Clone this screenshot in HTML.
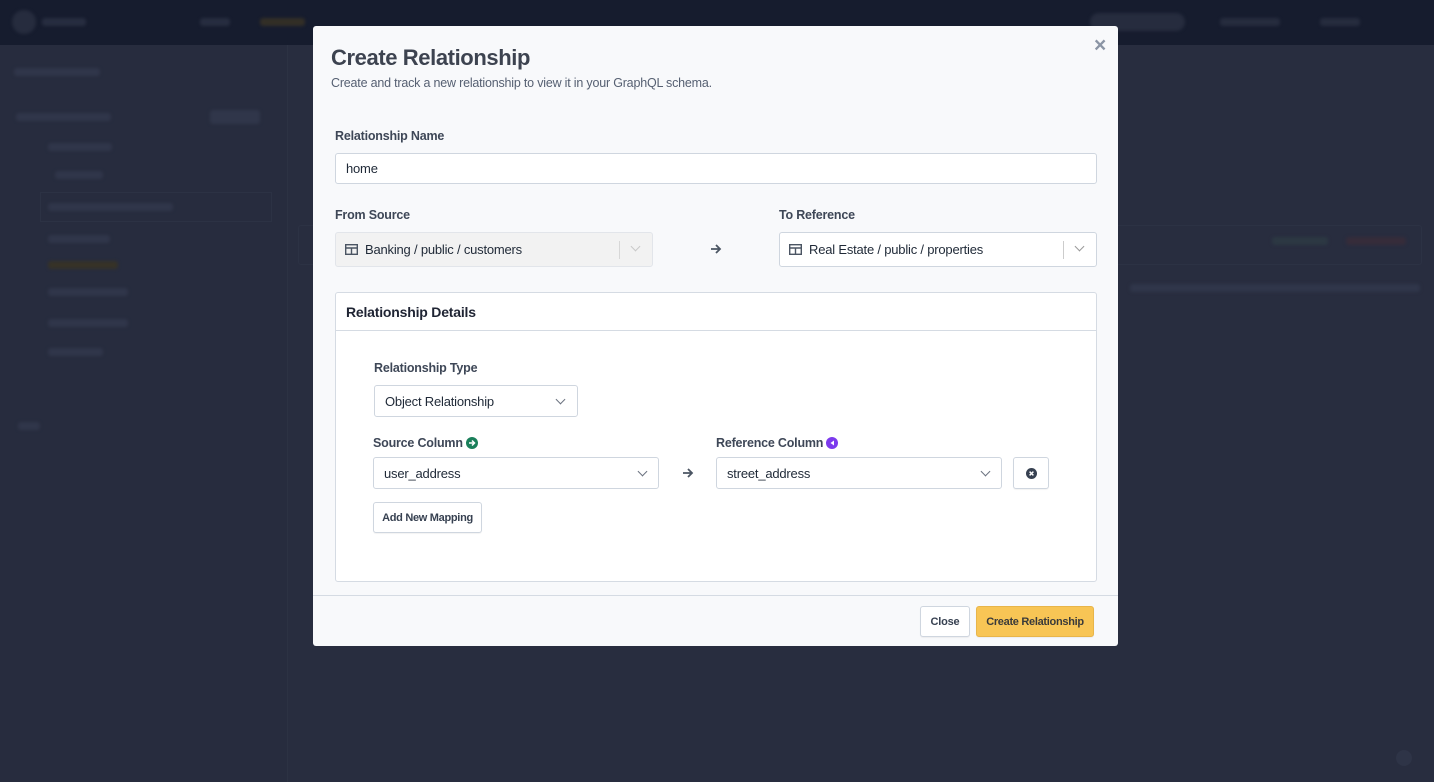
<!DOCTYPE html>
<html><head><meta charset="utf-8"><style>
*{box-sizing:border-box;margin:0;padding:0}
body{width:1434px;height:782px;overflow:hidden;background:#282d3f;font-family:"Liberation Sans",sans-serif;position:relative}
.a{position:absolute}
.nav{left:0;top:0;width:1434px;height:45px;background:#161c2e}
.side{left:0;top:45px;width:288px;height:737px;background:#272c3e;border-right:1px solid #2c3243}
.blur{background:#30364a;border-radius:3px;height:8px;filter:blur(1.5px)}
.modal{left:313px;top:26px;width:805px;height:620px;background:#f8f9fb;border-radius:3px;letter-spacing:-.2px}
.lbl{font-size:12.5px;font-weight:bold;color:#3e4757}
.inp{background:#fff;border:1px solid #cfd6df;border-radius:3px;font-size:13px;color:#1f2937}
.chev{position:absolute;width:7px;height:7px;border-right:1.3px solid #6b7280;border-bottom:1.3px solid #6b7280;transform:rotate(45deg)}
.btn{background:#fff;border:1px solid #cfd6df;border-radius:3px;font-size:11px;font-weight:bold;color:#374151;display:flex;align-items:center;justify-content:center;box-shadow:0 1px 1px rgba(0,0,0,.05)}
.ic{display:inline-block;width:12px;height:12px;border-radius:50%;vertical-align:-2px;margin-left:3px;position:relative}
</style></head><body>
<div class="a nav"></div>
<div class="a" style="left:12px;top:10px;width:24px;height:24px;border-radius:50%;background:#262c3e;filter:blur(1.5px)"></div>
<div class="a blur" style="left:42px;top:18px;width:44px;background:#272d40"></div>
<div class="a blur" style="left:200px;top:18px;width:30px;background:#272d40"></div>
<div class="a blur" style="left:260px;top:18px;width:45px;background:#332f27"></div>
<div class="a blur" style="left:1090px;top:13px;width:95px;height:18px;background:#262c3e;border-radius:9px"></div>
<div class="a blur" style="left:1220px;top:18px;width:60px;background:#262c3e"></div>
<div class="a blur" style="left:1320px;top:18px;width:40px;background:#262c3e"></div>
<div class="a side"></div>
<div class="a blur" style="left:14px;top:68px;width:86px"></div>
<div class="a blur" style="left:16px;top:113px;width:95px"></div>
<div class="a blur" style="left:210px;top:110px;width:50px;height:14px"></div>
<div class="a blur" style="left:48px;top:143px;width:64px"></div>
<div class="a blur" style="left:55px;top:171px;width:48px"></div>
<div class="a" style="left:40px;top:192px;width:232px;height:30px;border:1px solid #2c3244"></div>
<div class="a blur" style="left:48px;top:203px;width:125px"></div>
<div class="a blur" style="left:48px;top:235px;width:62px"></div>
<div class="a blur" style="left:48px;top:261px;width:70px;background:#363227"></div>
<div class="a blur" style="left:48px;top:288px;width:80px"></div>
<div class="a blur" style="left:48px;top:319px;width:80px"></div>
<div class="a blur" style="left:48px;top:348px;width:55px"></div>
<div class="a blur" style="left:18px;top:422px;width:22px"></div>
<div class="a" style="left:298px;top:225px;width:1124px;height:40px;border:1px solid #2c3244;border-radius:3px"></div>
<div class="a blur" style="left:1272px;top:237px;width:56px;background:#2c3843"></div>
<div class="a blur" style="left:1346px;top:237px;width:60px;background:#362c3a"></div>
<div class="a blur" style="left:1130px;top:284px;width:290px"></div>
<div class="a" style="left:1396px;top:750px;width:16px;height:16px;border-radius:50%;background:#2e3447"></div>

<div class="a modal">
  <div class="a" style="left:18px;top:19px;font-size:22px;font-weight:bold;color:#3d4350;letter-spacing:-.4px">Create Relationship</div>
  <div class="a" style="left:18px;top:50px;font-size:12.5px;color:#566072">Create and track a new relationship to view it in your GraphQL schema.</div>
  <div class="a" style="left:781px;top:8px;font-size:21px;font-weight:bold;color:#8b95a5">×</div>
  <div class="a lbl" style="left:22px;top:103px">Relationship Name</div>
  <div class="a inp" style="left:22px;top:127px;width:762px;height:31px;padding:7px 10px">home</div>
  <div class="a lbl" style="left:22px;top:182px">From Source</div>
  <div class="a lbl" style="left:466px;top:182px">To Reference</div>
  <div class="a inp" style="left:22px;top:206px;width:318px;height:35px;background:#f2f2f2;border-color:#e2e5ea;padding:9px 10px 0 29px">Banking / public / customers
    <svg class="a" style="left:9px;top:11px" width="13" height="11"><rect x=".7" y=".7" width="11.6" height="9.6" fill="none" stroke="#4b5563" stroke-width="1.4"/><path d="M1 4H12M6.5 4V10" stroke="#4b5563" stroke-width="1.4"/></svg>
    <div class="a" style="left:283px;top:8px;width:1px;height:18px;background:#d7d7d7"></div>
    <div class="chev" style="left:296px;top:10px;border-color:#c9c9c9"></div></div>
  <svg class="a" style="left:397px;top:218px" width="12" height="10"><path d="M1 5H10M6 1L10 5L6 9" fill="none" stroke="#4b5563" stroke-width="1.8"/></svg>
  <div class="a inp" style="left:466px;top:206px;width:318px;height:35px;padding:9px 10px 0 29px">Real Estate / public / properties
    <svg class="a" style="left:9px;top:11px" width="13" height="11"><rect x=".7" y=".7" width="11.6" height="9.6" fill="none" stroke="#4b5563" stroke-width="1.4"/><path d="M1 4H12M6.5 4V10" stroke="#4b5563" stroke-width="1.4"/></svg>
    <div class="a" style="left:283px;top:8px;width:1px;height:18px;background:#ccc"></div>
    <div class="chev" style="left:296px;top:10px;border-color:#999"></div></div>

  <div class="a" style="left:22px;top:266px;width:762px;height:290px;background:#fff;border:1px solid #d5dbe3;border-radius:3px">
    <div class="a" style="left:0;top:0;width:760px;height:38px;border-bottom:1px solid #d5dbe3"></div>
    <div class="a" style="left:10px;top:11px;font-size:14px;font-weight:bold;color:#1f2433">Relationship Details</div>
    <div class="a lbl" style="left:38px;top:68px">Relationship Type</div>
    <div class="a inp" style="left:38px;top:92px;width:204px;height:32px;padding:8px 10px">Object Relationship<div class="chev" style="left:182px;top:10px"></div></div>
    <div class="a lbl" style="left:37px;top:143px">Source Column<span class="ic" style="background:#1a7f5a"><svg class="a" style="left:2px;top:2px" width="8" height="8"><path d="M1 4H6.5M4 1.5L6.5 4L4 6.5" fill="none" stroke="#fff" stroke-width="1.5"/></svg></span></div>
    <div class="a lbl" style="left:380px;top:143px">Reference Column<span class="ic" style="background:#7c3aed"><svg class="a" style="left:2px;top:2px" width="8" height="8"><path d="M6 1.5L2.5 4L6 6.5Z" fill="#fff"/></svg></span></div>
    <div class="a inp" style="left:37px;top:164px;width:286px;height:32px;padding:8px 10px">user_address<div class="chev" style="left:265px;top:10px"></div></div>
    <svg class="a" style="left:346px;top:175px" width="12" height="10"><path d="M1 5H10M6 1L10 5L6 9" fill="none" stroke="#4b5563" stroke-width="1.8"/></svg>
    <div class="a inp" style="left:380px;top:164px;width:286px;height:32px;padding:8px 10px">street_address<div class="chev" style="left:265px;top:10px"></div></div>
    <div class="a btn" style="left:677px;top:164px;width:36px;height:32px"><svg width="11" height="11"><circle cx="5.5" cy="5.5" r="5.5" fill="#374151"/><path d="M3.6 3.6L7.4 7.4M7.4 3.6L3.6 7.4" stroke="#fff" stroke-width="1.5"/></svg></div>
    <div class="a btn" style="left:37px;top:209px;width:109px;height:31px;letter-spacing:-.3px">Add New Mapping</div>
  </div>
  <div class="a" style="left:0;top:569px;width:805px;height:1px;background:#d5dbe3"></div>
  <div class="a btn" style="left:607px;top:580px;width:50px;height:31px">Close</div>
  <div class="a btn" style="left:663px;top:580px;width:118px;height:31px;background:#f8c555;border-color:#e8b54a;color:#3a3a3a;letter-spacing:-.3px">Create Relationship</div>
</div>
</body></html>
